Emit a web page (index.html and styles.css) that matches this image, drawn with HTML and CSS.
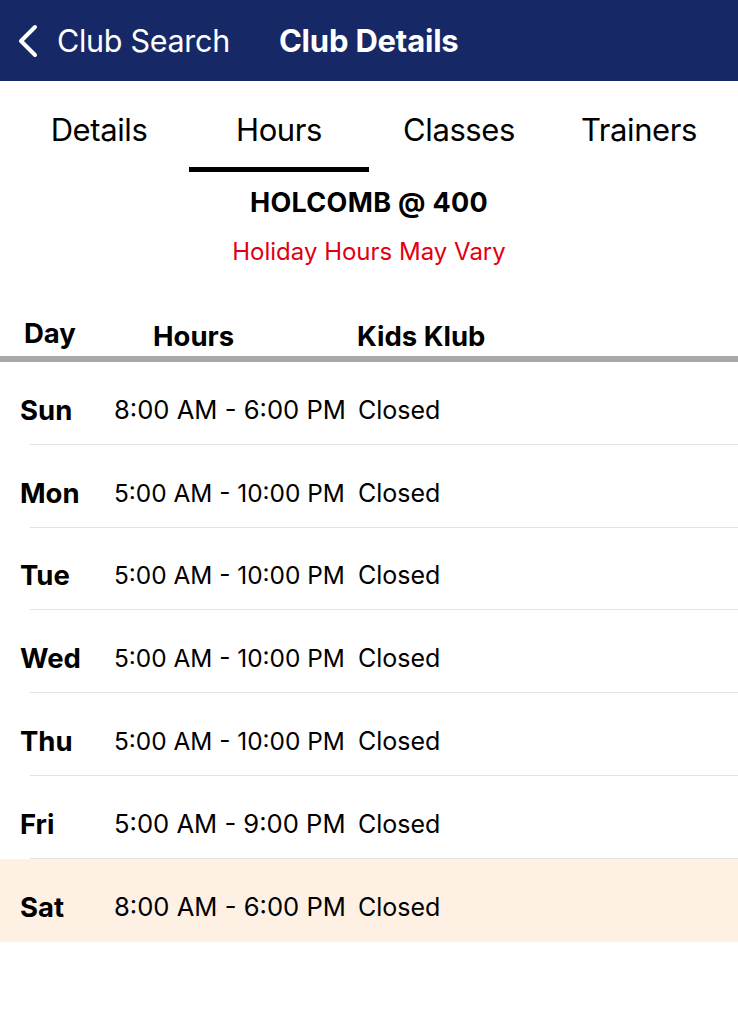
FILE: index.html
```html
<!DOCTYPE html>
<html>
<head>
<meta charset="utf-8">
<link rel="stylesheet" href="styles.css">
</head>
<body>
<header class="nav">
  <div class="back">
    <svg class="chev" width="22" height="34" viewBox="0 0 22 34"><path d="M19 3 L5 17 L19 31" fill="none" stroke="#fff" stroke-width="4" stroke-linecap="round" stroke-linejoin="round"/></svg>
    <span class="back-label">Club Search</span>
  </div>
  <div class="nav-title">Club Details</div>
</header>
<nav class="tabs">
  <div class="tab">Details</div>
  <div class="tab active">Hours</div>
  <div class="tab">Classes</div>
  <div class="tab">Trainers</div>
</nav>
<section class="club">
  <h1 class="club-name">HOLCOMB @ 400</h1>
  <p class="notice">Holiday Hours May Vary</p>
</section>
<div class="thead">
  <div class="th th-day">Day</div>
  <div class="th th-hours">Hours</div>
  <div class="th th-kids">Kids Klub</div>
</div>
<div class="rows">
  <div class="row"><div class="day">Sun</div><div class="hours">8:00 AM - 6:00 PM</div><div class="kids">Closed</div></div>
  <div class="row"><div class="day">Mon</div><div class="hours hours-long">5:00 AM - 10:00 PM</div><div class="kids">Closed</div></div>
  <div class="row"><div class="day">Tue</div><div class="hours hours-long">5:00 AM - 10:00 PM</div><div class="kids">Closed</div></div>
  <div class="row"><div class="day">Wed</div><div class="hours hours-long">5:00 AM - 10:00 PM</div><div class="kids">Closed</div></div>
  <div class="row"><div class="day">Thu</div><div class="hours hours-long">5:00 AM - 10:00 PM</div><div class="kids">Closed</div></div>
  <div class="row"><div class="day">Fri</div><div class="hours">5:00 AM - 9:00 PM</div><div class="kids">Closed</div></div>
  <div class="row today"><div class="day">Sat</div><div class="hours">8:00 AM - 6:00 PM</div><div class="kids">Closed</div></div>
</div>
</body>
</html>
```
FILE: styles.css
```css
* { box-sizing: border-box; }
html, body { margin: 0; padding: 0; background: #fff; }
body {
  font-family: Inter, "Noto Sans", "Liberation Sans", sans-serif;
  color: #000;
  width: 738px;
}
.nav {
  height: 81px;
  background: #172866;
  display: flex;
  align-items: center;
  padding-left: 16px;
  color: #fff;
}
.back {
  display: flex;
  align-items: center;
  gap: 19px;
}
.chev { display: block; }
.back-label {
  font-size: 30.5px;
  font-weight: 400;
  letter-spacing: -0.3px;
}
.nav-title {
  margin-left: 49px;
  font-size: 31px;
  font-weight: 700;
  letter-spacing: -0.2px;
}
.tabs {
  display: flex;
  padding: 0 9px;
  height: 91px;
}
.tab {
  width: 180px;
  display: flex;
  align-items: center;
  justify-content: center;
  font-size: 31px;
  letter-spacing: -0.4px;
  padding-top: 10px;
  border-bottom: 5px solid transparent;
}
.tab.active { border-bottom-color: #000; }
.club {
  text-align: center;
  padding-top: 13px;
}
.club-name {
  margin: 0;
  font-size: 27px;
  font-weight: 700;
  line-height: 36px;
  letter-spacing: 0.3px;
}
.notice {
  margin: 16px 0 0;
  font-size: 24px;
  line-height: 30px;
  color: #e0000f;
}
.thead {
  display: flex;
  align-items: flex-end;
  height: 95px;
  padding-bottom: 5px;
  border-bottom: 6px solid #a9a9a9;
}
.th {
  font-size: 27.5px;
  font-weight: 700;
  line-height: 30px;
}
.th-day { margin-left: 24px; width: 129px; padding-bottom: 3px; }
.th-hours { width: 204px; }
.row {
  height: 82.8px;
  display: flex;
  align-items: center;
  padding-top: 13px;
  position: relative;
}
.row::after {
  content: "";
  position: absolute;
  left: 30px;
  right: 0;
  bottom: 0;
  height: 1px;
  background: #e2e2e2;
}
.row.today { background: #fef1e4; }
.row.today::after { display: none; }
.day {
  width: 114px;
  padding-left: 20px;
  font-size: 27.5px;
  font-weight: 700;
}
.hours {
  width: 244px;
  font-size: 25.6px;
  white-space: nowrap;
}
.hours-long {
  font-size: 24.4px;
}
.kids {
  font-size: 25px;
}
```
